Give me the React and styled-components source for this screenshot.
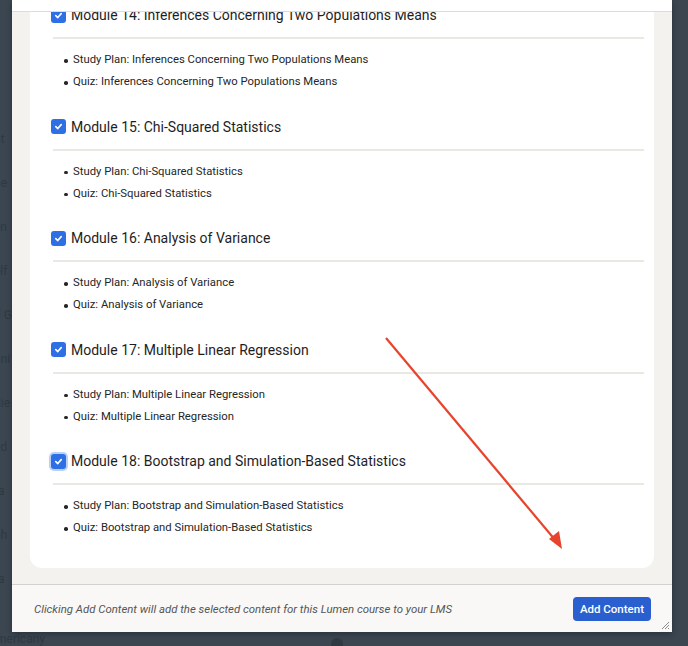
import React from 'react'
import styled, { createGlobalStyle } from 'styled-components'

const GlobalStyle = createGlobalStyle`
  html, body {
    margin: 0;
    padding: 0;
    background: #3b4651;
    font-family: Roboto, "Noto Sans", sans-serif;
  }
  #root {
    width: 688px;
    height: 646px;
    overflow: hidden;
    position: relative;
  }
`;

const modules = [
  { num: 14, title: 'Inferences Concerning Two Populations Means' },
  { num: 15, title: 'Chi-Squared Statistics' },
  { num: 16, title: 'Analysis of Variance' },
  { num: 17, title: 'Multiple Linear Regression' },
  { num: 18, title: 'Bootstrap and Simulation-Based Statistics', focused: true },
];

const backWords = ['nt', 'ne', 'en', 'elf', 'd G', 'hni', 'die', 'ad', 'ta', 'ph', 'ta'];

const Page = styled.div`
  width: 688px;
  height: 646px;
  background: #3b4651;
`;

const BackColumn = styled.div`
  display: flex;
  flex-direction: column;
  gap: 22px;
  padding-top: 128px;
  margin-left: -6px;
  span {
    font-size: 12px;
    color: #2f3942;
    line-height: 22px;
  }
`;

const BackBottom = styled.div`
  position: absolute;
  left: 0;
  bottom: 0;
  width: 688px;
  height: 14px;
  display: flex;
  align-items: center;
  span {
    font-size: 12px;
    color: #2f3942;
    margin-left: -4px;
  }
  i {
    margin-left: 286px;
    width: 12px;
    height: 12px;
    border-radius: 50%;
    background: #2f3942;
    margin-top: 10px;
  }
`;

const Modal = styled.div`
  position: absolute;
  left: 12px;
  top: 0;
  width: 660px;
  height: 632px;
  background: #f3f2ef;
  display: flex;
  flex-direction: column;
  box-shadow: 0 2px 6px rgba(0, 0, 0, 0.3);
`;

const Header = styled.div`
  height: 11px;
  background: #ffffff;
  border-bottom: 1px solid #dedcd8;
  flex-shrink: 0;
`;

const Body = styled.div`
  flex: 1;
  overflow: hidden;
  padding: 0 18px 16px;
  display: flex;
  flex-direction: column;
  justify-content: flex-end;
`;

const Card = styled.div`
  background: #ffffff;
  border-radius: 12px;
  padding: 20px 10px 29px 21px;
  display: flex;
  flex-direction: column;
  gap: 21.5px;
`;

const Module = styled.div`
  display: flex;
  flex-direction: column;
`;

const Heading = styled.label`
  display: flex;
  align-items: center;
  gap: 5px;
  height: 24px;
  font-size: 14px;
  color: #1e1e1e;
`;

const Check = styled.span`
  width: 15px;
  height: 15px;
  border-radius: 3px;
  background: #2f6fe4;
  display: flex;
  align-items: center;
  justify-content: center;
  flex-shrink: 0;
  box-shadow: ${p => (p.$focused ? '0 0 0 2px #b9d0f7' : 'none')};
`;

const Divider = styled.div`
  height: 2px;
  background: #eae8e3;
  margin: 10px 0 10px 2px;
`;

const Items = styled.ul`
  list-style: none;
  margin: 0;
  padding: 0 0 0 22px;
`;

const Item = styled.li`
  position: relative;
  font-size: 11.3px;
  line-height: 22px;
  color: #262626;
  &::before {
    content: '';
    position: absolute;
    left: -9px;
    top: 10px;
    width: 3.5px;
    height: 3.5px;
    border-radius: 50%;
    background: #262626;
  }
`;

const Footer = styled.div`
  height: 47px;
  flex-shrink: 0;
  border-top: 1px solid #d3d1cd;
  background: #f9f8f6;
  display: flex;
  align-items: center;
  justify-content: space-between;
  padding: 0 21px 0 22px;
  position: relative;
`;

const Note = styled.span`
  font-size: 11.4px;
  font-style: italic;
  color: #555555;
`;

const Button = styled.button`
  font-family: inherit;
  font-size: 11.5px;
  font-weight: 500;
  color: #ffffff;
  background: #2a5fd0;
  border: none;
  border-radius: 4px;
  height: 24px;
  padding: 0 7px;
  margin-top: 1px;
`;

const Grip = styled.svg`
  position: absolute;
  right: 2px;
  bottom: 2px;
`;

const Arrow = styled.svg`
  position: absolute;
  left: 0;
  top: 0;
  pointer-events: none;
`;

function Tick() {
  return (
    <svg width="9" height="9" viewBox="0 0 10 10">
      <path d="M2 5.2 L4.2 7.3 L8 2.9" fill="none" stroke="#fff" strokeWidth="1.8" strokeLinecap="round" strokeLinejoin="round" />
    </svg>
  );
}

export default function App() {
  return (
    <Page>
      <GlobalStyle />
      <BackColumn>
        {backWords.map((w, i) => <span key={i}>{w}</span>)}
      </BackColumn>
      <BackBottom>
        <span>mericany</span>
        <i />
      </BackBottom>
      <Modal>
        <Header />
        <Body>
          <Card>
            {modules.map(m => (
              <Module key={m.num}>
                <Heading>
                  <Check $focused={m.focused}><Tick /></Check>
                  Module {m.num}: {m.title}
                </Heading>
                <Divider />
                <Items>
                  <Item>Study Plan: {m.title}</Item>
                  <Item>Quiz: {m.title}</Item>
                </Items>
              </Module>
            ))}
          </Card>
        </Body>
        <Footer>
          <Note>Clicking Add Content will add the selected content for this Lumen course to your LMS</Note>
          <Button>Add Content</Button>
          <Grip width="9" height="9" viewBox="0 0 9 9">
            <path d="M8 1 L1 8 M8 4 L4 8 M8 7 L7 8" stroke="#8a8a8a" strokeWidth="1" />
          </Grip>
        </Footer>
      </Modal>
      <Arrow width="688" height="646">
        <line x1="386" y1="338" x2="556" y2="541" stroke="#e8432c" strokeWidth="2.2" />
        <path d="M562 549 L549 539 L559 531 Z" fill="#e8432c" />
      </Arrow>
    </Page>
  );
}
